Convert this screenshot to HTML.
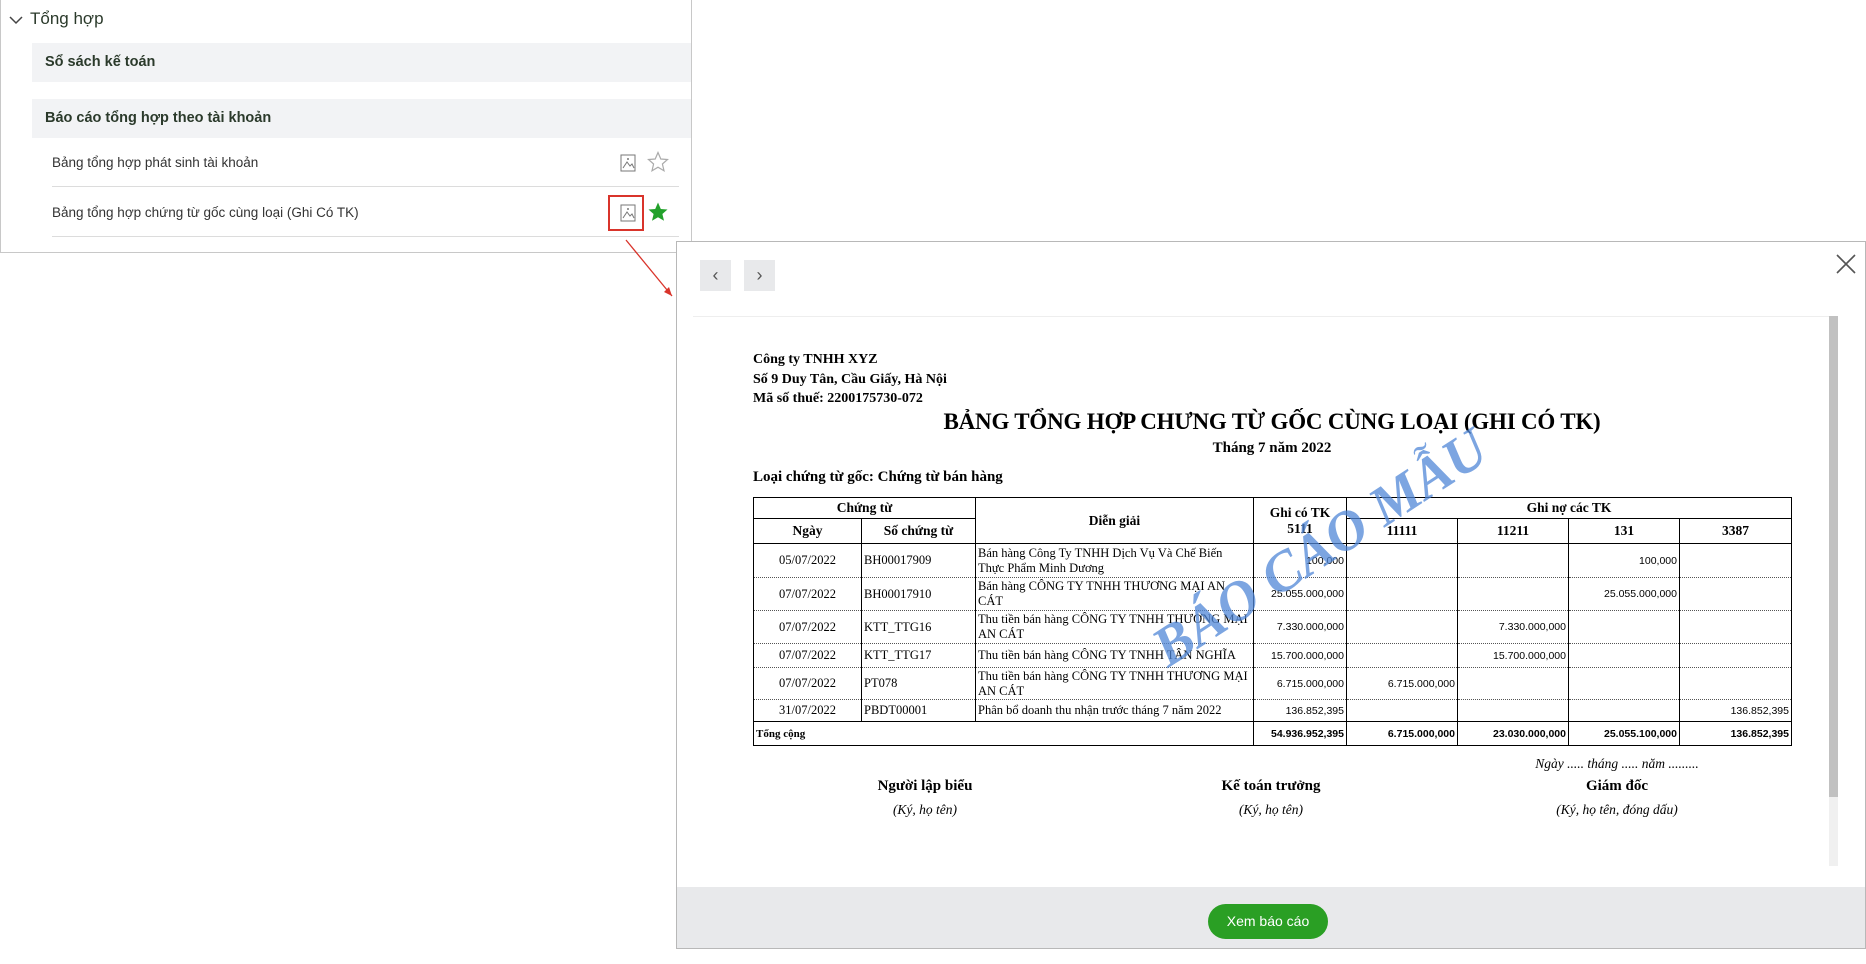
<!DOCTYPE html>
<html><head><meta charset="utf-8"><style>
*{margin:0;padding:0;box-sizing:border-box}
body{width:1866px;height:964px;background:#fff;position:relative;overflow:hidden;font-family:"Liberation Sans",sans-serif}
.a{position:absolute}
.side{left:0;top:0;width:692px;height:253px;border:1px solid #c8c8c8;border-top:none}
.gr{background:#f2f3f5;left:32px;width:659px;height:39px;font-weight:bold;font-size:14.5px;color:#2b3a2b;padding-left:13px;line-height:39px}
.it{left:52px;width:627px;font-size:13.5px;color:#333;border-bottom:1px solid #dcdcdc;height:48px;line-height:48px;padding-left:0}
.dlg{left:676px;top:241px;width:1190px;height:708px;border:1px solid #b8b8b8;background:#fff}
.nb{width:31px;height:31px;background:#e8e9eb;color:#555;text-align:center;line-height:30px;font-size:18px}
.paper{font-family:"Liberation Serif",serif;color:#000}
table{border-collapse:collapse;table-layout:fixed;position:absolute;left:753px;top:497px;width:1038px;font-family:"Liberation Serif",serif}
td{border:1px solid #000;font-size:12.5px;padding:0 2px;overflow:hidden;white-space:nowrap}
td.n{font-family:"Liberation Sans",sans-serif;font-size:10.5px;text-align:right}
.h td{font-weight:bold;text-align:center;font-size:13.5px}
.d td{border-top:1px dotted #555;border-bottom:1px dotted #555}
td.w{white-space:normal;line-height:15px}
</style></head><body>
<div class="a side"></div>
<svg class="a" style="left:9px;top:15px" width="14" height="10"><path d="M1 2 L7 8 L13 2" stroke="#444" stroke-width="1.5" fill="none"/></svg>
<div class="a" style="left:30px;top:9px;font-size:17px;color:#2b3a2b">Tổng hợp</div>
<div class="a gr" style="top:43px">Sổ sách kế toán</div>
<div class="a gr" style="top:99px">Báo cáo tổng hợp theo tài khoản</div>
<div class="a it" style="top:139px">Bảng tổng hợp phát sinh tài khoản</div>
<div class="a it" style="top:189px">Bảng tổng hợp chứng từ gốc cùng loại (Ghi Có TK)</div>
<svg class="a" style="left:620px;top:154px" width="16" height="18"><rect x="1" y="1" width="14" height="16" fill="none" stroke="#777"/><path d="M3 14 L7 8 L10 12 L12 10 L14 14" fill="none" stroke="#777"/><circle cx="8" cy="5" r="1" fill="#777"/></svg>
<svg class="a" style="left:647px;top:151px" width="22" height="22"><path d="M11 1.5 L13.8 8 L20.5 8.5 L15.4 13 L17 19.8 L11 16.2 L5 19.8 L6.6 13 L1.5 8.5 L8.2 8 Z" fill="none" stroke="#aaa" stroke-width="1.2"/></svg>
<div class="a" style="left:608px;top:195px;width:36px;height:36px;border:2px solid #d9342b"></div>
<svg class="a" style="left:620px;top:204px" width="16" height="18"><rect x="1" y="1" width="14" height="16" fill="none" stroke="#777"/><path d="M3 14 L7 8 L10 12 L12 10 L14 14" fill="none" stroke="#777"/><circle cx="8" cy="5" r="1" fill="#777"/></svg>
<svg class="a" style="left:647px;top:201px" width="22" height="22"><path d="M11 1.5 L13.8 8 L20.5 8.5 L15.4 13 L17 19.8 L11 16.2 L5 19.8 L6.6 13 L1.5 8.5 L8.2 8 Z" fill="#23a12b"/></svg>
<svg class="a" style="left:600px;top:230px" width="80" height="75"><path d="M26 10 L72 66" stroke="#d9342b" stroke-width="1.3"/><path d="M72 66 L64 62 L69 57 Z" fill="#d9342b"/></svg>
<div class="a dlg"></div>
<div class="a nb" style="left:700px;top:260px">‹</div>
<div class="a nb" style="left:744px;top:260px">›</div>
<svg class="a" style="left:1836px;top:254px" width="20" height="20"><path d="M1 1 L19 19 M19 1 L1 19" stroke="#555" stroke-width="1.6"/></svg>
<div class="a" style="left:693px;top:316px;width:1145px;height:1px;background:#eee"></div>
<div class="a" style="left:1829px;top:316px;width:9px;height:550px;background:#f0f0f0"></div>
<div class="a" style="left:1829px;top:316px;width:9px;height:481px;background:#c1c1c1"></div>
<div class="paper">
<div class="a" style="left:753px;top:350px;font-size:14px;font-weight:bold;line-height:19.5px">Công ty TNHH XYZ<br>Số 9 Duy Tân, Cầu Giấy, Hà Nội<br>Mã số thuế: 2200175730-072</div>
<div class="a" style="left:753px;width:1038px;top:409px;text-align:center;font-size:23px;font-weight:bold;letter-spacing:-0.2px">BẢNG TỔNG HỢP CHƯNG TỪ GỐC CÙNG LOẠI (GHI CÓ TK)</div>
<div class="a" style="left:753px;width:1038px;top:440px;text-align:center;font-size:15px;font-weight:bold">Tháng 7 năm 2022</div>
<div class="a" style="left:753px;top:469px;font-size:15px;font-weight:bold">Loại chứng từ gốc: Chứng từ bán hàng</div>
</div>
<table>
<colgroup><col style="width:108px"><col style="width:114px"><col style="width:278px"><col style="width:93px"><col style="width:111px"><col style="width:111px"><col style="width:111px"><col style="width:112px"></colgroup>
<tr class="h" style="height:21px"><td colspan="2">Chứng từ</td><td rowspan="2">Diễn giải</td><td rowspan="2" style="line-height:16px">Ghi có TK<br>5111</td><td colspan="4">Ghi nợ các TK</td></tr>
<tr class="h" style="height:25px"><td>Ngày</td><td>Số chứng từ</td><td>11111</td><td>11211</td><td>131</td><td>3387</td></tr>
<tr class="d" style="height:34px"><td style="text-align:center">05/07/2022</td><td>BH00017909</td><td class="w">Bán hàng Công Ty TNHH Dịch Vụ Và Chế Biến Thực Phẩm Minh Dương</td><td class="n">100,000</td><td></td><td></td><td class="n">100,000</td><td></td></tr>
<tr class="d" style="height:33px"><td style="text-align:center">07/07/2022</td><td>BH00017910</td><td class="w">Bán hàng CÔNG TY TNHH THƯƠNG MẠI AN CÁT</td><td class="n">25.055.000,000</td><td></td><td></td><td class="n">25.055.000,000</td><td></td></tr>
<tr class="d" style="height:33px"><td style="text-align:center">07/07/2022</td><td>KTT_TTG16</td><td class="w">Thu tiền bán hàng CÔNG TY TNHH THƯƠNG MẠI AN CÁT</td><td class="n">7.330.000,000</td><td></td><td class="n">7.330.000,000</td><td></td><td></td></tr>
<tr class="d" style="height:24px"><td style="text-align:center">07/07/2022</td><td>KTT_TTG17</td><td>Thu tiền bán hàng CÔNG TY TNHH TÂN NGHĨA</td><td class="n">15.700.000,000</td><td></td><td class="n">15.700.000,000</td><td></td><td></td></tr>
<tr class="d" style="height:32px"><td style="text-align:center">07/07/2022</td><td>PT078</td><td class="w">Thu tiền bán hàng CÔNG TY TNHH THƯƠNG MẠI AN CÁT</td><td class="n">6.715.000,000</td><td class="n">6.715.000,000</td><td></td><td></td><td></td></tr>
<tr class="d" style="height:22px"><td style="text-align:center">31/07/2022</td><td>PBDT00001</td><td>Phân bổ doanh thu nhận trước tháng 7 năm 2022</td><td class="n">136.852,395</td><td></td><td></td><td></td><td class="n">136.852,395</td></tr>
<tr style="height:24px;font-weight:bold"><td colspan="3" style="font-size:11px;border-top:1.5px solid #000">Tổng cộng</td><td class="n" style="border-top:1.5px solid #000">54.936.952,395</td><td class="n" style="border-top:1.5px solid #000">6.715.000,000</td><td class="n" style="border-top:1.5px solid #000">23.030.000,000</td><td class="n" style="border-top:1.5px solid #000">25.055.100,000</td><td class="n" style="border-top:1.5px solid #000">136.852,395</td></tr>
</table>
<div class="paper">
<div class="a" style="left:1467px;width:300px;top:756px;text-align:center;font-size:13.5px;font-style:italic">Ngày ..... tháng ..... năm .........</div>
<div class="a" style="left:775px;width:300px;top:778px;text-align:center;font-size:15px;font-weight:bold">Người lập biểu</div>
<div class="a" style="left:1121px;width:300px;top:778px;text-align:center;font-size:15px;font-weight:bold">Kế toán trưởng</div>
<div class="a" style="left:1467px;width:300px;top:778px;text-align:center;font-size:15px;font-weight:bold">Giám đốc</div>
<div class="a" style="left:775px;width:300px;top:802px;text-align:center;font-size:13.5px;font-style:italic">(Ký, họ tên)</div>
<div class="a" style="left:1121px;width:300px;top:802px;text-align:center;font-size:13.5px;font-style:italic">(Ký, họ tên)</div>
<div class="a" style="left:1467px;width:300px;top:802px;text-align:center;font-size:13.5px;font-style:italic">(Ký, họ tên, đóng dấu)</div>
<div class="a" style="left:1060px;top:516px;width:520px;text-align:center;font-size:56px;font-weight:bold;font-style:italic;color:rgba(80,135,215,.75);transform:rotate(-33deg);transform-origin:center">BÁO CÁO MẪU</div>
</div>
<div class="a" style="left:677px;top:887px;width:1188px;height:61px;background:#e8e9eb"></div>
<div class="a" style="left:1208px;top:904px;width:120px;height:35px;border-radius:18px;background:#2a9f24;color:#fff;font-size:14px;text-align:center;line-height:35px">Xem báo cáo</div>
</body></html>
